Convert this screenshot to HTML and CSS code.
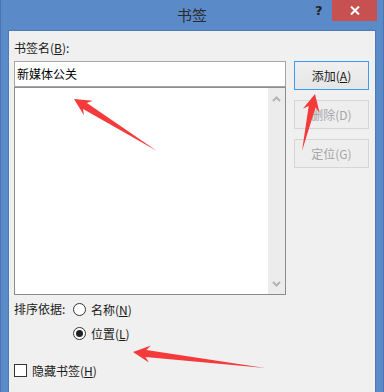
FILE: index.html
```html
<!DOCTYPE html>
<html lang="zh-CN">
<head>
<meta charset="utf-8">
<title>书签</title>
<link rel="stylesheet" href="styles.css">
</head>
<body>
<div class="window">
  <div class="titlebar">
    <div class="title">书签</div>
    <div class="help">?</div>
    <div class="close">
      <svg width="10" height="9" viewBox="0 0 10 9"><path d="M1 0.5 L9 8.5 M9 0.5 L1 8.5" stroke="#fff" stroke-width="2"/></svg>
    </div>
  </div>
  <div class="client">
    <div class="top">
      <div class="leftcol">
        <div class="label">书签名(<u>B</u>):</div>
        <div class="input">新媒体公关</div>
        <div class="listbox">
          <div class="listarea"></div>
          <div class="scrollbar">
            <svg width="9" height="6" viewBox="0 0 9 6"><path d="M1 5 L4.5 1.5 L8 5" fill="none" stroke="#b4b4b4" stroke-width="2"/></svg>
            <svg width="9" height="6" viewBox="0 0 9 6"><path d="M1 1 L4.5 4.5 L8 1" fill="none" stroke="#b4b4b4" stroke-width="2"/></svg>
          </div>
        </div>
      </div>
      <div class="buttons">
        <div class="btn default">添加(<u>A</u>)</div>
        <div class="btn disabled">删除(D)</div>
        <div class="btn disabled">定位(G)</div>
      </div>
    </div>
    <div class="sort">
      <div class="sortlabel">排序依据:</div>
      <div class="radios">
        <div class="radiorow"><span class="radio"></span><span>名称(<u>N</u>)</span></div>
        <div class="radiorow"><span class="radio checked"></span><span>位置(<u>L</u>)</span></div>
      </div>
    </div>
    <div class="checkrow"><span class="checkbox"></span><span>隐藏书签(<u>H</u>)</span></div>
  </div>
  <svg class="arrows" width="384" height="392" viewBox="0 0 384 392">
    <polygon fill="#f43a3a" points="74,99 83.9,115.2 83.1,108.9 157,151 86.9,102.9 92.9,100.8"/>
    <polygon fill="#f43a3a" points="315,94 302.9,108.7 308.7,105.9 302,151 315.5,107.5 319.5,112.5"/>
    <polygon fill="#f43a3a" points="133,352 148.9,362.4 145.5,357.1 265,368 146.3,350.1 150.9,345.6"/>
  </svg>
</div>
</body>
</html>
```
FILE: styles.css
```css
* { box-sizing: border-box; }
html, body { margin: 0; padding: 0; }
body {
  width: 384px;
  height: 392px;
  overflow: hidden;
  font-family: "Noto Sans CJK SC", "Noto Sans", sans-serif;
  font-size: 12px;
  color: #1a1a1a;
}
u { text-decoration: underline; text-underline-offset: 1px; }
.window {
  position: relative;
  width: 384px;
  height: 392px;
  background: #5b8ac8;
  border-left: 1px solid #4a75b2;
  border-right: 1px solid #4a75b2;
  display: flex;
  flex-direction: column;
}
.titlebar {
  height: 30px;
  position: relative;
  display: flex;
  justify-content: center;
  align-items: flex-start;
}
.title {
  font-size: 15px;
  line-height: 30px;
  color: #2b2b2b;
}
.help {
  position: absolute;
  left: 314px;
  top: 1px;
  font-family: "DejaVu Sans", sans-serif;
  font-weight: bold;
  font-size: 13px;
  line-height: 20px;
  color: #222;
}
.close {
  position: absolute;
  left: 331px;
  top: 0;
  width: 45px;
  height: 21px;
  background: #c75050;
  display: flex;
  align-items: center;
  justify-content: center;
}
.client {
  flex: 1;
  margin: 0 7px 0 7px;
  background: #f0f0f0;
  border: 1px solid #4f7ab6;
  border-bottom: none;
  padding: 0 6px 0 5px;
}
.top { display: flex; }
.leftcol { width: 272px; }
.label {
  padding-top: 9px;
  height: 30px;
  line-height: 16px;
  padding-bottom: 5px;
}
.input {
  height: 26px;
  border: 1px solid #a6a6a6;
  background: #fff;
  padding-left: 2px;
  line-height: 24px;
  font-size: 12px;
  color: #000;
}
.listbox {
  height: 208px;
  border: 1px solid #8c8c8c;
  background: #fff;
  display: flex;
}
.listarea { flex: 1; }
.scrollbar {
  width: 17px;
  background: #ececec;
  display: flex;
  flex-direction: column;
  justify-content: space-between;
  align-items: center;
  padding: 8px 0 7px;
}
.buttons {
  margin-left: 8px;
  margin-top: 30px;
  width: 75px;
  display: flex;
  flex-direction: column;
  gap: 10px;
}
.btn {
  height: 29px;
  display: flex;
  align-items: center;
  justify-content: center;
  border: 1px solid #acacac;
  background: linear-gradient(#f0f0f0, #e5e5e5);
}
.btn.default {
  border-color: #3d9af2;
  color: #1a1a1a;
}
.btn.disabled {
  border-color: #d5d5d5;
  background: #eeeeee;
  color: #a5a5a5;
}
.sort {
  display: flex;
  margin-top: 2px;
}
.sortlabel {
  width: 59px;
  line-height: 24px;
}
.radios { display: flex; flex-direction: column; }
.radiorow {
  height: 24px;
  display: flex;
  align-items: center;
  gap: 5px;
}
.radio {
  width: 13px;
  height: 13px;
  border: 1px solid #333;
  border-radius: 50%;
  background: #fff;
  display: flex;
  align-items: center;
  justify-content: center;
}
.radio.checked::after {
  content: "";
  width: 7px;
  height: 7px;
  border-radius: 50%;
  background: #222;
}
.checkrow {
  margin-top: 13px;
  height: 24px;
  display: flex;
  align-items: center;
  gap: 5px;
}
.checkbox {
  width: 13px;
  height: 13px;
  border: 1px solid #333;
  background: #fff;
}
.arrows {
  position: absolute;
  left: -1px;
  top: 0;
  pointer-events: none;
}
```
